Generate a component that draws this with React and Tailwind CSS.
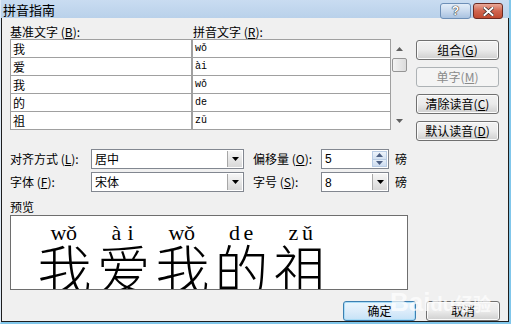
import React from "react";

const CJK = { fontFamily: '"Noto Sans CJK SC", "Liberation Sans", sans-serif' };
const MONO = { fontFamily: '"Liberation Mono", "Noto Sans CJK SC", monospace' };

function Mn({ c }) {
  return (
    <span>
      (<span className="underline">{c}</span>)
    </span>
  );
}

function DropBtn() {
  return (
    <div className="w-[15px] h-full border-l border-[#a7a7a7] bg-gradient-to-b from-[#f6f6f6] to-[#d8d8d8] flex items-center justify-center">
      <svg width="7" height="4" viewBox="0 0 7 4">
        <path d="M0 0h7L3.5 4z" fill="#000" />
      </svg>
    </div>
  );
}

function Combo({ value, className }) {
  return (
    <div className={"h-[20px] bg-white border border-[#828790] flex items-stretch " + className}>
      <div className="flex-1 pl-[3px] text-[12px] leading-[18px]">{value}</div>
      <div className="p-[1px]">
        <DropBtn />
      </div>
    </div>
  );
}

function Spin({ value }) {
  return (
    <div className="h-[20px] w-[68px] bg-white border border-[#828790] flex items-stretch">
      <div className="flex-1 pl-[3px] text-[12px] leading-[18px]" style={{ fontFamily: '"Liberation Sans", sans-serif' }}>{value}</div>
      <div className="w-[15px] my-[1px] mr-[1px] flex flex-col border border-[#b9cce4]">
        <div className="flex-1 bg-gradient-to-b from-[#eef4fb] to-[#d3e1f1] flex items-center justify-center border-b border-[#b9cce4]">
          <svg width="7" height="4" viewBox="0 0 7 4"><path d="M0 4h7L3.5 0z" fill="#4d6185" /></svg>
        </div>
        <div className="flex-1 bg-gradient-to-b from-[#e6eef8] to-[#cddcef] flex items-center justify-center">
          <svg width="7" height="4" viewBox="0 0 7 4"><path d="M0 0h7L3.5 4z" fill="#4d6185" /></svg>
        </div>
      </div>
    </div>
  );
}

function Btn({ children, disabled, def, className = "" }) {
  const base = "h-[20px] rounded-[3px] flex items-center justify-center text-[12px] ";
  if (disabled)
    return (
      <div className={base + "border border-[#adb2b5] bg-[#f4f4f4] text-[#8a8a8a] " + className}>{children}</div>
    );
  if (def)
    return (
      <div className={base + "border border-[#3c7fb1] bg-gradient-to-b from-[#eaf6fd] via-[#dcecfa] to-[#c6e2f7] shadow-[inset_0_0_0_1px_#a9dcf7] text-black " + className}>{children}</div>
    );
  return (
    <div className={base + "border border-[#707070] bg-gradient-to-b from-[#f2f2f2] via-[#ebebeb] to-[#cfcfcf] shadow-[inset_0_0_0_1px_#fbfbfb] text-black " + className}>{children}</div>
  );
}

const rows = [
  ["我", "wǒ"],
  ["爱", "ài"],
  ["我", "wǒ"],
  ["的", "de"],
  ["祖", "zǔ"],
];

function Chars({ s }) {
  return (
    <span className="inline-flex">
      {s.split("").map((ch, i) => (
        <span key={i} className="inline-block w-[14px] text-center">{ch}</span>
      ))}
    </span>
  );
}

export default function App() {
  return (
    <div className="w-[511px] h-[329px] bg-white overflow-hidden" style={CJK}>
      <div className="w-[511px] h-[324px] border-l border-l-[#dfeaf6] border-r-2 border-b-2 border-r-[#80c6ea] border-b-[#80c6ea] flex flex-col">
        {/* title bar */}
        <div className="h-[22px] bg-gradient-to-b from-[#c9dcf1] to-[#b9d1ea] flex items-center relative">
          <span className="ml-[2px] text-[13px] text-black leading-none">拼音指南</span>
          <div className="absolute right-[6px] top-[3px] flex gap-[2px]">
            <div className="w-[31px] h-[16px] rounded-[3px] border border-[#6d8fb7] bg-gradient-to-b from-[#e3edf8] via-[#c9daee] to-[#a9c2e0] flex items-center justify-center">
              <span className="text-white text-[12px] font-bold leading-none" style={{ fontFamily: '"Liberation Sans", sans-serif', textShadow: "0 0 1px #333, 0 0 1px #333, 0 0 1px #333" }}>?</span>
            </div>
            <div className="w-[30px] h-[16px] rounded-[3px] border border-[#6b2a22] bg-gradient-to-b from-[#e9a99a] via-[#d0654f] to-[#c04a30] flex items-center justify-center">
              <svg width="11" height="9" viewBox="0 0 11 9">
                <path d="M1.5 1 L9.5 8 M9.5 1 L1.5 8" stroke="#3a2a28" strokeWidth="3.4" strokeLinecap="square" />
                <path d="M1.5 1 L9.5 8 M9.5 1 L1.5 8" stroke="#fff" strokeWidth="2" strokeLinecap="square" />
              </svg>
            </div>
          </div>
        </div>
        {/* content */}
        <div className="flex-1 bg-[#f0f0f0] border-l border-r border-b border-[#1e1e1e] px-[8px] pt-[7px] flex flex-col text-[12px] text-black">
          <div className="flex">
            <div className="w-[397px]">
              <div className="flex h-[14px] leading-[14px]">
                <div className="w-[183px]">基准文字 <Mn c="B" />:</div>
                <div>拼音文字 <Mn c="R" />:</div>
              </div>
              <div className="flex h-[91px]">
                <div className="w-[381px] border-l border-t border-[#a0a0a0] grid grid-cols-[182px_198px] grid-rows-[repeat(5,18px)]">
                  {rows.map(([h, p], i) => (
                    <React.Fragment key={i}>
                      <div className="bg-white border-r-2 border-b border-[#a0a0a0] pl-[2px] leading-[17px]">{h}</div>
                      <div className="bg-white border-r border-b border-[#a0a0a0] pl-[2px] leading-[17px] text-[10px]" style={MONO}>{p}</div>
                    </React.Fragment>
                  ))}
                </div>
                <div className="w-[16px] bg-[#f0f0f0] flex flex-col items-center">
                  <div className="h-[19px] w-full flex items-center justify-center">
                    <svg width="7" height="4" viewBox="0 0 7 4"><path d="M0 4h7L3.5 0z" fill="#606060" /></svg>
                  </div>
                  <div className="h-[14px] w-[15px] rounded-[2px] border border-[#959595] bg-gradient-to-r from-[#f3f3f3] to-[#dcdcdc]" />
                  <div className="flex-1" />
                  <div className="h-[18px] w-full flex items-center justify-center">
                    <svg width="7" height="4" viewBox="0 0 7 4"><path d="M0 0h7L3.5 4z" fill="#606060" /></svg>
                  </div>
                </div>
              </div>
            </div>
            <div className="ml-[9px] w-[83px] pt-[15px] flex flex-col gap-[7px]">
              <Btn>组合 <Mn c="G" /></Btn>
              <Btn disabled>单字 <Mn c="M" /></Btn>
              <Btn>清除读音 <Mn c="C" /></Btn>
              <Btn>默认读音 <Mn c="D" /></Btn>
            </div>
          </div>

          <div className="mt-[8px] flex items-center h-[20px]">
            <div className="w-[81px]">对齐方式 <Mn c="L" />:</div>
            <Combo value="居中" className="w-[153px]" />
            <div className="ml-[9px] w-[68px]">偏移量 <Mn c="O" />:</div>
            <Spin value="5" />
            <div className="ml-[6px]">磅</div>
          </div>
          <div className="mt-[3px] flex items-center h-[20px]">
            <div className="w-[81px]">字体 <Mn c="F" />:</div>
            <Combo value="宋体" className="w-[153px]" />
            <div className="ml-[9px] w-[68px]">字号 <Mn c="S" />:</div>
            <Combo value={<span style={{ fontFamily: '"Liberation Sans", sans-serif' }}>8</span>} className="w-[68px]" />
            <div className="ml-[6px]">磅</div>
          </div>

          <div className="mt-[8px] h-[14px] leading-[14px]">预览</div>
          <div className="mt-[1px] w-[398px] h-[75px] bg-white border border-[#6e6e6e] overflow-hidden pl-[24px] pt-[5px] flex">
            {rows.map(([h, p], i) => (
              <div key={i} className="w-[59px] flex flex-col items-center">
                <div className="text-[22px] leading-[24px] text-black" style={{ fontFamily: '"Liberation Serif", serif' }}>
                  <Chars s={p} />
                </div>
                <div className="text-[54px] leading-none -mt-[4px] font-light" style={CJK}>{h}</div>
              </div>
            ))}
          </div>

          <div className="mt-[11px] flex justify-end gap-[10px] relative">
            <Btn def className="w-[73px]">确定</Btn>
            <Btn className="w-[74px]">取消</Btn>
            <div className="absolute left-[380px] -top-[12px] text-white/70 text-[26px] font-bold leading-none pointer-events-none" style={{ fontFamily: '"Liberation Sans", sans-serif' }}>
              Bai<span className="text-[20px]">du</span>
              <span className="text-[18px]" style={CJK}>经验</span>
            </div>
          </div>
        </div>
      </div>
    </div>
  );
}
